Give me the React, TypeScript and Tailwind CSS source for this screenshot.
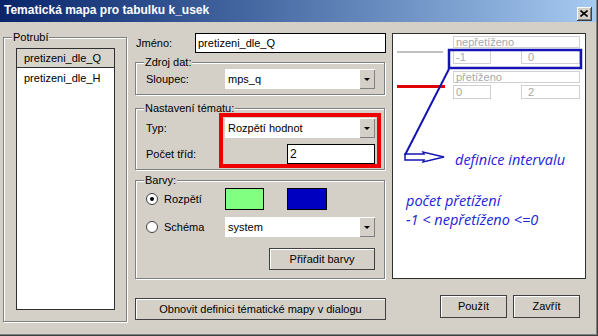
import React from 'react';

function Group({ label, className, children }: { label: string; className: string; children?: React.ReactNode }) {
  return (
    <div className={`relative border border-[#808080] shadow-[inset_1px_1px_0_#fff,1px_1px_0_#fff] ${className}`}>
      <span className="absolute -top-[7px] left-[8px] bg-[#d4d0c8] px-[1px] leading-[13px]">{label}</span>
      {children}
    </div>
  );
}

function Combo({ value, className = '' }: { value: string; className?: string }) {
  return (
    <div className={`flex h-[20px] w-[150px] items-center bg-white ${className}`}>
      <span className="flex-1 pl-[3px]">{value}</span>
      <div className="flex h-full w-[16px] items-center justify-center bg-[#d4d0c8] shadow-[inset_1px_1px_0_#fff,inset_-1px_-1px_0_#808080]">
        <span className="h-0 w-0 border-x-[3px] border-t-[3px] border-x-transparent border-t-black" />
      </div>
    </div>
  );
}

function Radio({ checked, label }: { checked?: boolean; label: string }) {
  return (
    <div className="flex items-center gap-[6px]">
      <span className="flex h-[12px] w-[12px] items-center justify-center rounded-full border border-[#404040] bg-white">
        {checked && <span className="h-[4px] w-[4px] rounded-full bg-black" />}
      </span>
      <span>{label}</span>
    </div>
  );
}

function WinButton({ label, className }: { label: string; className: string }) {
  return (
    <button className={`flex items-center justify-center border border-[#404040] bg-[#d4d0c8] shadow-[inset_1px_1px_0_#fff] ${className}`}>
      {label}
    </button>
  );
}

function ClassRow({ name, from, to, line }: { name: string; from: string; to: string; line: 'gray' | 'red' }) {
  return (
    <div className="flex">
      <div className="w-[55px] pl-[4px]">
        {line === 'gray' ? (
          <div className="mt-[15px] h-[2px] w-[46px] bg-[#c0c0c0]" />
        ) : (
          <div className="mt-[14px] h-[3px] w-[48px] bg-[#e00000]" />
        )}
      </div>
      <div className="ml-[5px] flex w-[127px] flex-col gap-[2px] text-[#a8a8a8]">
        <div className="h-[12px] border border-[#d0d0d0] pl-[2px] leading-[10px]">{name}</div>
        <div className="flex h-[14px] justify-between">
          <div className="w-[38px] border border-[#d0d0d0] pl-[2px] leading-[12px]">{from}</div>
          <div className="w-[59px] border border-[#d0d0d0] pl-[6px] leading-[12px]">{to}</div>
        </div>
      </div>
    </div>
  );
}

export default function App() {
  return (
    <div className="flex h-[336px] w-[598px] flex-col overflow-hidden border-r border-b border-[#404040] bg-[#d4d0c8] font-['Liberation_Sans',Arial,sans-serif] text-[11px] leading-[13px] text-black">
      <div className="flex flex-1 flex-col border-r border-b border-[#808080]">
        {/* Title bar */}
        <div className="flex h-[22px] items-center justify-between bg-gradient-to-r from-[#0a246a] to-[#a6caf0] pl-[4px] pr-[4px]">
          <span className="pb-[2px] text-[12px] font-bold text-white">Tematická mapa pro tabulku k_usek</span>
          <div className="mt-[6px] flex h-[14px] w-[15px] items-center justify-center border-r border-b border-[#404040] bg-[#d4d0c8] shadow-[inset_1px_1px_0_#fff,inset_-1px_-1px_0_#808080]">
            <svg width="8" height="7" viewBox="0 0 8 7">
              <path d="M0.5 0.5 L7.5 6.5 M7.5 0.5 L0.5 6.5" stroke="#000" strokeWidth="1.6" />
            </svg>
          </div>
        </div>

        <div className="flex pt-[11px]">
          {/* Potrubí */}
          <Group label="Potrubí" className="mt-[4px] ml-[3px] h-[285px] w-[124px] flex-none">
            <div className="mt-[10px] ml-[12px] h-[262px] w-[99px] border border-[#303030] bg-white">
              <div className="flex h-[19px] items-center border-b border-[#303030] bg-[#d8d4cc] pl-[7px]">pretizeni_dle_Q</div>
              <div className="flex h-[21px] items-center pl-[7px]">pretizeni_dle_H</div>
            </div>
          </Group>

          {/* Middle column */}
          <div className="ml-[8px] flex w-[251px] flex-none flex-col">
            <div className="flex h-[20px] items-center">
              <span className="w-[60px] pl-[1px]">Jméno:</span>
              <div className="flex h-full flex-1 items-center border border-black bg-white pl-[2px]">pretizeni_dle_Q</div>
            </div>

            <Group label="Zdroj dat:" className="mt-[9px] h-[33px] w-[250px]">
              <div className="mt-[6px] flex items-center">
                <span className="w-[89px] pl-[10px]">Sloupec:</span>
                <Combo value="mps_q" />
              </div>
            </Group>

            <Group label="Nastavení tématu:" className="mt-[13px] h-[62px] w-[250px]">
              <div className="mt-[9px] flex items-center pr-[9px]">
                <span className="flex-1 pl-[10px]">Typ:</span>
                <Combo value="Rozpětí hodnot" className="h-[19px]" />
              </div>
              <div className="mt-[6px] flex items-center pr-[9px]">
                <span className="flex-1 pl-[10px]">Počet tříd:</span>
                <div className="flex h-[20px] w-[88px] items-center border border-black bg-white pl-[2px] text-[12px]">2</div>
              </div>
              <div className="absolute top-[4px] left-[83px] h-[55px] w-[162px] border-4 border-[#ee0000]" />
            </Group>

            <Group label="Barvy:" className="mt-[10px] h-[99px] w-[250px]">
              <div className="mt-[7px] flex items-center">
                <div className="w-[89px] pl-[10px]">
                  <Radio checked label="Rozpětí" />
                </div>
                <div className="h-[22px] w-[39px] border border-black bg-[#80ff80]" />
                <div className="ml-[23px] h-[22px] w-[40px] border border-black bg-[#0000c0]" />
              </div>
              <div className="mt-[7px] flex items-center">
                <div className="w-[89px] pl-[10px]">
                  <Radio label="Schéma" />
                </div>
                <Combo value="system" />
              </div>
              <div className="mt-[11px] flex justify-end pr-[9px]">
                <WinButton label="Přiřadit barvy" className="h-[22px] w-[106px]" />
              </div>
            </Group>

            <WinButton label="Obnovit definici tématické mapy v dialogu" className="mt-[19px] h-[22px] w-[251px]" />
          </div>

          {/* Right column */}
          <div className="ml-[6px] flex w-[194px] flex-none flex-col">
            <div className="relative h-[246px] border border-[#303030] bg-white pt-[2px]">
              <ClassRow name="nepřetíženo" from="-1" to="0" line="gray" />
              <div className="mt-[7px]">
                <ClassRow name="přetíženo" from="0" to="2" line="red" />
              </div>
              <div className="mt-[51px] pl-[62px] font-['Open_Sans',sans-serif] text-[14.5px] leading-[19px] text-[#2222d8] italic">
                definice intervalu
              </div>
              <div className="mt-[22px] pl-[13px] font-['Open_Sans',sans-serif] text-[14.5px] leading-[19px] text-[#2222d8] italic">
                <div>počet přetížení</div>
                <div>-1 &lt; nepřetíženo &lt;=0</div>
              </div>
              <svg className="pointer-events-none absolute inset-0" width="192" height="244" viewBox="0 0 192 244">
                <rect x="56" y="16" width="132" height="18" fill="none" stroke="#1414b4" strokeWidth="2.5" />
                <path d="M56 35 L12 121" stroke="#1414b4" strokeWidth="2" fill="none" />
                <path d="M12 120 L31 120 L30 118 L51 123 L30 128 L31 126 L12 126 Z" stroke="#1414b4" strokeWidth="1.5" fill="none" />
              </svg>
            </div>
            <div className="mt-[16px] flex justify-end gap-[6px] pr-[6px]">
              <WinButton label="Použít" className="h-[23px] w-[67px]" />
              <WinButton label="Zavřít" className="h-[23px] w-[67px]" />
            </div>
          </div>
        </div>
      </div>
    </div>
  );
}
